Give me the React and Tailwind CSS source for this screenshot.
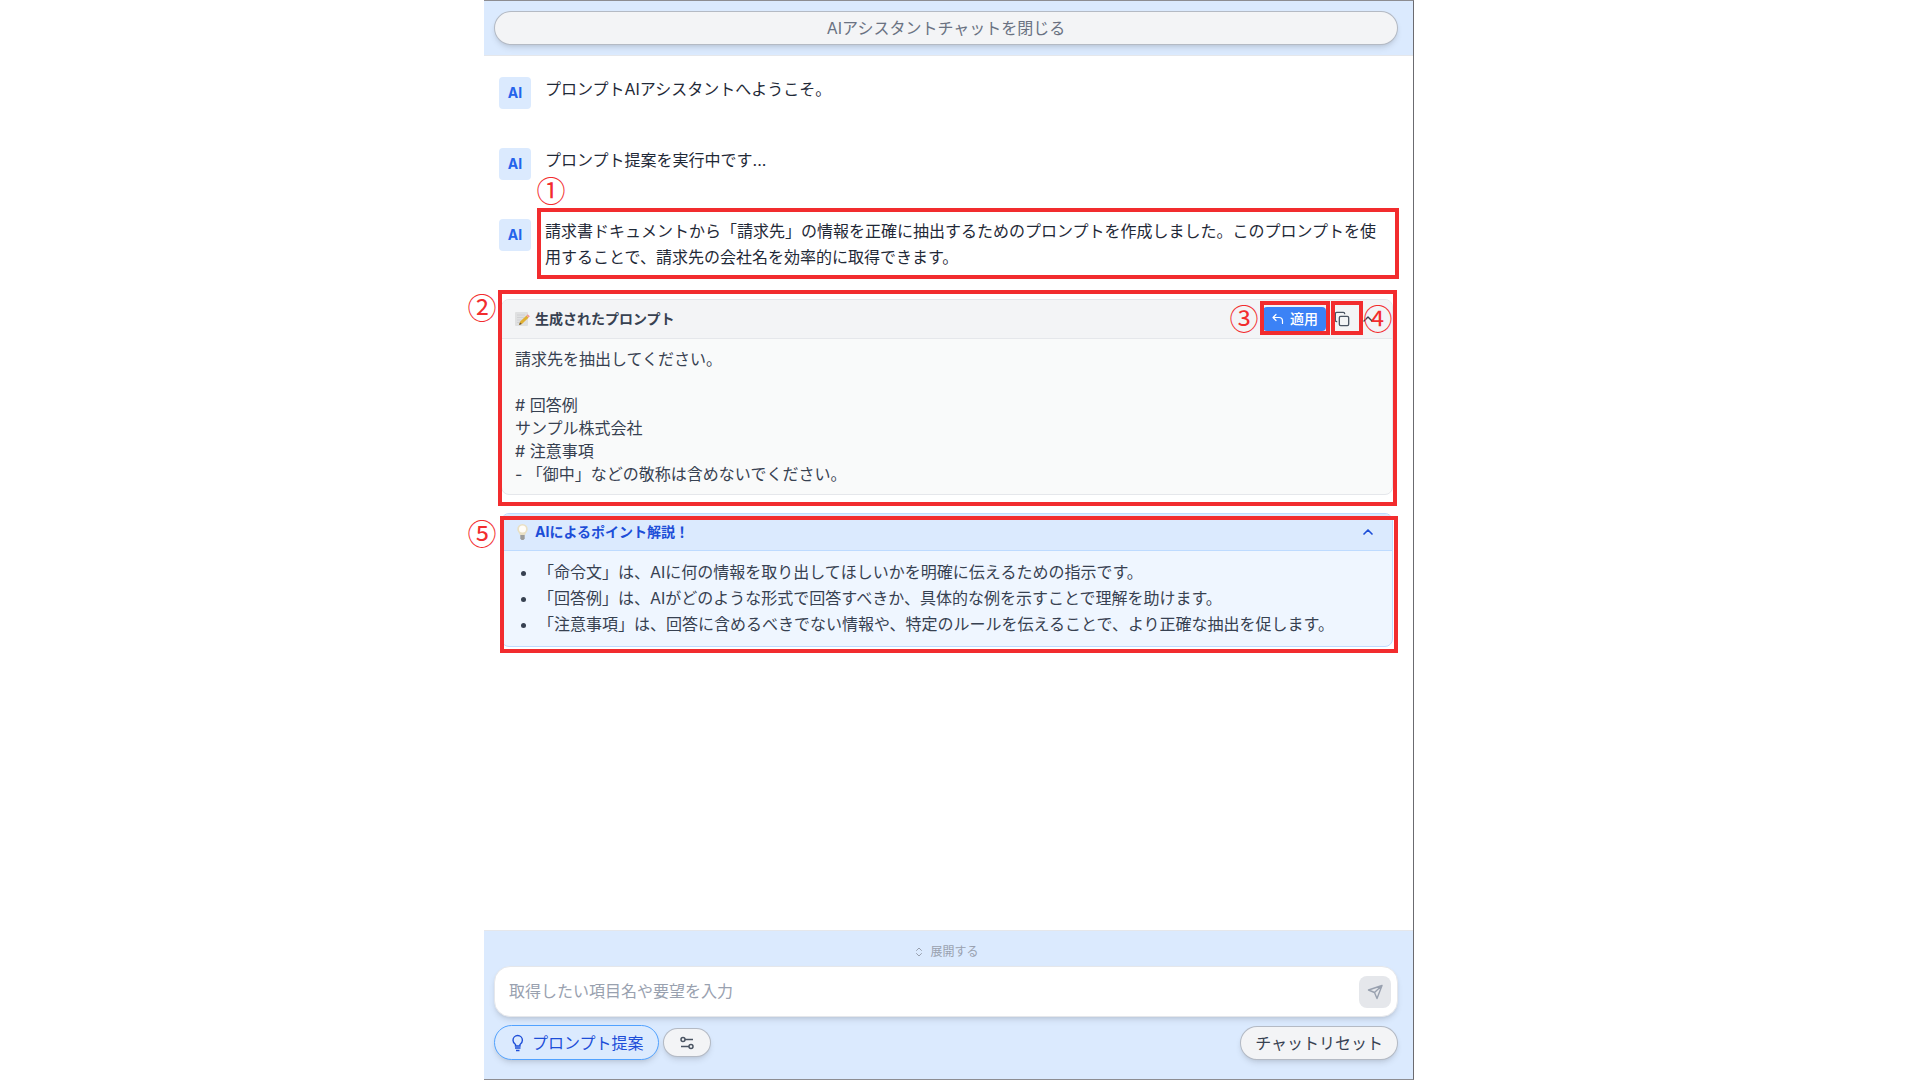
import { Copy, ChevronUp, ChevronsUpDown } from "lucide-react";

function Marker({ className, children }) {
  return (
    <span className={`absolute flex size-7 items-center justify-center font-['Noto_Sans_CJK_JP'] text-[29px] leading-7 text-[#f22c2e] ${className}`}>
      {children}
    </span>
  );
}

function Frame({ className }) {
  return <span aria-hidden="true" className={`pointer-events-none absolute border-4 border-[#f22c2e] ${className}`} />;
}

function Message({ children }) {
  return (
    <div className="flex gap-[14px]">
      <span className="mt-px flex size-8 shrink-0 items-center justify-center rounded-sm bg-blue-100 text-sm font-bold text-[#2563eb]">AI</span>
      <div className="relative min-w-0 flex-1">{children}</div>
    </div>
  );
}

function MemoIcon() {
  return (
    <svg viewBox="0 0 16 16" className="size-4" aria-hidden="true">
      <rect x="1" y="1" width="13" height="14" rx="1" fill="#dfe0e1" />
      <path d="M3 4h8M3 6.500h7M3 9h5M3 11.500h4" stroke="#cbcdd0" strokeWidth="0.8" />
      <path d="M5 14l1.200-3.500 6.300-6 2 2.200-6.300 6z" fill="#e0b033" />
      <path d="M6 11.500l1.800 1.500L5 14z" fill="#6b5535" />
      <path d="M12.500 4.500l1.200-1.300 2.200 2-1.400 1.500z" fill="#ee9a9a" />
    </svg>
  );
}

function BulbEmoji() {
  return (
    <svg viewBox="0 0 16 18" className="h-[18px] w-4" aria-hidden="true">
      <path d="M8.500 1a5.300 5.300 0 0 0-5.300 5.300c0 2.400 2.300 3.400 2.700 5.700h5.200c.4-2.300 2.700-3.300 2.700-5.700A5.300 5.300 0 0 0 8.500 1z" fill="#e9e0c4" />
      <ellipse cx="8.500" cy="6" rx="3.500" ry="3.500" fill="#fffdf8" />
      <path d="M6.300 12h4.400v3.500L9.500 17h-2l-1.200-1.500z" fill="#9c9c9a" />
    </svg>
  );
}

function ApplyIcon() {
  return (
    <svg viewBox="0 0 14 14" className="size-[14px]" fill="none" stroke="currentColor" strokeWidth="1.200" strokeLinecap="round" strokeLinejoin="round" aria-hidden="true">
      <path d="M5 2.500L2 5.500l3 3M2 5.500h6a3.500 3.500 0 0 1 3.500 3.500v2.500" />
    </svg>
  );
}

export default function App() {
  return (
    <div className="grid min-h-screen grid-cols-[484fr_930fr_506fr] bg-white font-[Inter,'Noto_Sans_CJK_JP',sans-serif] text-base text-[#1f2937]">
      <main className="col-start-2 flex min-w-0 flex-col border-y border-r border-y-[#8d8d92] border-r-[#6b6b70]">
        <header className="border-b border-gray-200 bg-blue-100 pt-[10px] pr-[15px] pb-[10px] pl-[10px]">
          <button className="h-[34px] w-full rounded-full border border-gray-400/70 bg-gray-100 text-gray-500 shadow-md">
            AIアシスタントチャットを閉じる
          </button>
        </header>

        <section className="flex flex-1 flex-col pt-5 pr-[22px] pl-[15px] leading-[26px]">
          <div className="flex flex-col gap-[38px]">
            <Message>プロンプトAIアシスタントへようこそ。</Message>
            <Message>プロンプト提案を実行中です...</Message>
            <Message>
              <Marker className="-top-[43px] -left-2">①</Marker>
              <Frame className="-top-[10px] -right-2 -bottom-[9px] -left-2" />
              請求書ドキュメントから「請求先」の情報を正確に抽出するためのプロンプトを作成しました。このプロンプトを使用することで、請求先の会社名を効率的に取得できます。
            </Message>
          </div>

          <article className="relative mt-[29px] ml-[2px] -mr-[2px]">
            <div className="overflow-hidden rounded-lg border border-gray-200 bg-[#f9fafa]">
              <header className="flex h-[39px] items-center border-b border-gray-200 bg-gray-100 pr-4 pl-3">
                <MemoIcon />
                <h2 className="ml-[5px] flex-1 text-sm font-bold text-[#374151]">生成されたプロンプト</h2>
                <button className="flex h-6 items-center gap-[5px] rounded-sm bg-[#3b82f6] px-2 text-sm font-medium text-white">
                  <ApplyIcon />
                  適用
                </button>
                <button aria-label="コピー" className="ml-2 text-[#4b5563]"><Copy className="size-4" /></button>
                <button aria-label="折りたたむ" className="ml-[10px] text-[#374151]"><ChevronUp className="size-4" /></button>
              </header>
              <p className="px-[13px] pt-[9px] pb-2 leading-[23px] whitespace-pre-line text-[#374151]">
                {"請求先を抽出してください。\n\n# 回答例\nサンプル株式会社\n# 注意事項\n- 「御中」などの敬称は含めないでください。"}
              </p>
            </div>
            <Frame className="-top-[9px] -right-1 -bottom-[11px] -left-[3px]" />
            <Frame className="top-[2px] right-[63px] h-[34px] w-[70px]" />
            <Frame className="top-[2px] right-[30px] h-[34px] w-8" />
            <Marker className="-top-[7px] -left-[33px]">②</Marker>
            <Marker className="top-1 right-[135px]">③</Marker>
            <Marker className="top-1 right-[1px]">④</Marker>
          </article>

          <article className="relative mt-[18px] ml-[2px] -mr-[2px]">
            <div className="overflow-hidden rounded-lg border border-blue-200 bg-[#eff6ff]">
              <header className="flex h-[37px] items-center border-b border-blue-200 bg-blue-100 pr-4 pl-3">
                <BulbEmoji />
                <h2 className="ml-[5px] flex-1 text-sm font-bold text-[#1d4ed8]">AIによるポイント解説！</h2>
                <button aria-label="折りたたむ" className="text-[#1d4ed8]"><ChevronUp className="size-4" strokeWidth={2.5} /></button>
              </header>
              <ul className="list-disc pt-2 pr-3 pb-[9px] pl-9 text-[#374151]">
                <li>「命令文」は、AIに何の情報を取り出してほしいかを明確に伝えるための指示です。</li>
                <li>「回答例」は、AIがどのような形式で回答すべきか、具体的な例を示すことで理解を助けます。</li>
                <li>「注意事項」は、回答に含めるべきでない情報や、特定のルールを伝えることで、より正確な抽出を促します。</li>
              </ul>
            </div>
            <Frame className="top-[3px] -right-[5px] -bottom-[6px] -left-[1px]" />
            <Marker className="top-[5px] -left-[33px]">⑤</Marker>
          </article>
        </section>

        <footer className="border-t border-gray-200 bg-blue-100 pt-[13px] pr-[15px] pb-[19px] pl-[10px]">
          <button className="mx-auto flex items-center gap-[5px] text-xs text-gray-400">
            <ChevronsUpDown className="size-3" />
            展開する
          </button>
          <form className="mt-[6px] flex h-[51px] items-center rounded-2xl border border-gray-200 bg-white pr-[6px] pl-[14px] shadow-md">
            <input aria-label="メッセージ" placeholder="取得したい項目名や要望を入力" className="min-w-0 flex-1 pb-[2px] outline-none placeholder:text-gray-400" />
            <button type="button" aria-label="送信" className="flex size-8 items-center justify-center rounded-lg bg-gray-200 text-gray-400">
              <svg viewBox="0 0 16 16" className="size-4" fill="none" stroke="currentColor" strokeWidth="1.400" strokeLinejoin="round"><path d="M15 1.500L1.500 6l6 2.500L10 14.500zM7.500 8.500L15 1.500" /></svg>
            </button>
          </form>
          <div className="mt-2 flex items-center gap-1">
            <button className="flex h-[35px] items-center gap-[7px] rounded-full border border-blue-400 bg-blue-100 px-[14px] text-[#1d4ed8] shadow-md">
              <svg viewBox="0 0 16 18" className="h-[18px] w-4" fill="none" stroke="currentColor" strokeWidth="1.400"><path d="M6.500 12V10.500C5 9.500 4 8 4 6.200a4.700 4.700 0 0 1 9.400 0c0 1.800-1 3.300-2.400 4.300V12zM6 14h5.500M7 16.500h3.500" /></svg>
              プロンプト提案
            </button>
            <button aria-label="設定" className="flex h-[29px] w-12 items-center justify-center rounded-full border border-gray-400/70 bg-gray-100 text-[#4b5563] shadow-md">
              <svg viewBox="0 0 16 16" className="size-4" fill="none" stroke="currentColor" strokeWidth="1.500"><circle cx="4" cy="4.500" r="2" /><path d="M6 4.500h8M2 11.500h8" /><circle cx="12" cy="11.500" r="2" /></svg>
            </button>
            <button className="ml-auto h-[34px] rounded-full border border-gray-400/70 bg-gray-100 px-[14px] text-[#374151] shadow-md">チャットリセット</button>
          </div>
        </footer>
      </main>
    </div>
  );
}
